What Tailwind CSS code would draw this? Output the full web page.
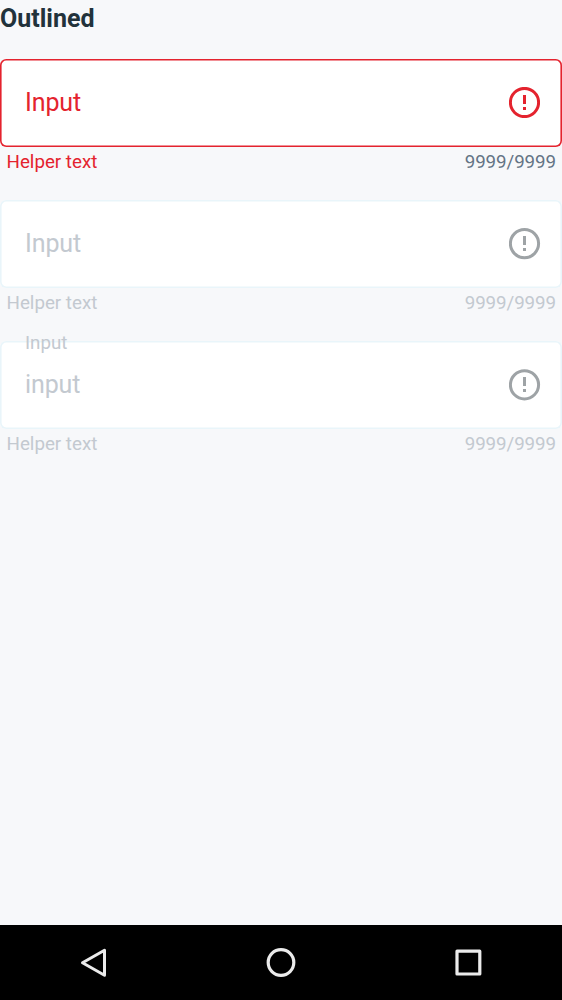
<!DOCTYPE html>
<html lang="en">
<head>
<meta charset="utf-8">
<title>Outlined</title>
<script src="https://cdn.jsdelivr.net/npm/@tailwindcss/browser@4"></script>
</head>
<body class="bg-[#f7f8fa] font-['Roboto',sans-serif]">
<div class="flex h-[1000px] w-[562px] flex-col overflow-hidden">
<main class="flex-1">
<h1 class="h-[59px] pt-[4px] text-[25px] leading-[30px] font-bold text-[#22323b]">Outlined</h1>
<section class="h-[141px] text-[#e4232e]">
<div class="flex h-[87.5px] items-center justify-between rounded-[6.25px] bg-white pr-[22px] pl-[25px] shadow-[inset_0_0_0_1.6px_#e4232e]">
<span class="text-[25px] leading-[30px] tracking-[-0.1px]">Input</span>
<svg class="mb-[0.5px] size-[31px]" viewBox="0 0 31 31" fill="none" stroke="currentColor" stroke-width="3"><circle cx="15.5" cy="15.5" r="14.1"/><path d="M15.5 8v9M15.5 20v3"/></svg>
</div>
<div class="flex justify-between pr-[6px] pl-[6.5px] pt-[3.5px] text-[18.75px] leading-[24px]"><span>Helper text</span><span class="tracking-[-0.08px] text-[#647485]">9999/9999</span></div>
</section>
<section class="h-[141px] text-[#c3c9d0]">
<div class="flex h-[88px] items-center justify-between rounded-[6.25px] bg-white pr-[22px] pl-[25px] shadow-[inset_0_0_0_1.6px_#e9f5fa]">
<span class="text-[25px] leading-[30px] tracking-[-0.1px]">Input</span>
<svg class="size-[32px] text-[#9ea3a6] -mr-px" viewBox="0 0 32 32" fill="none" stroke="currentColor" stroke-width="3"><circle cx="15.5" cy="15.6" r="14.1"/><path d="M15.5 8v9M15.5 20v3"/></svg>
</div>
<div class="flex justify-between pr-[6px] pl-[6.5px] pt-[3px] text-[18.75px] leading-[24px]"><span>Helper text</span><span class="tracking-[-0.08px]">9999/9999</span></div>
</section>
<section class="relative h-[141px] text-[#c3c9d0]">
<div class="flex h-[88px] items-center justify-between rounded-[6.25px] bg-white pr-[22px] pl-[25px] shadow-[inset_0_0_0_1.6px_#e9f5fa]">
<span class="text-[25px] leading-[30px] tracking-[-0.1px]">input</span>
<svg class="size-[32px] text-[#9ea3a6] -mr-px" viewBox="0 0 32 32" fill="none" stroke="currentColor" stroke-width="3"><circle cx="15.5" cy="15.8" r="14.1"/><path d="M15.5 8v9M15.5 20v3"/></svg>
</div>
<span class="absolute top-[-10px] left-[25px] text-[18.75px] leading-[24px]">Input</span>
<div class="flex justify-between pr-[6px] pl-[6.5px] pt-[3px] text-[18.75px] leading-[24px]"><span>Helper text</span><span class="tracking-[-0.08px]">9999/9999</span></div>
</section>
</main>
<nav class="grid h-[75px] grid-cols-3 place-items-center bg-black text-[#ebebeb]">
<svg class="size-[36px]" viewBox="0 0 36 36" fill="none" stroke="currentColor" stroke-width="3" stroke-linejoin="round"><path d="M28.5 5.2v25L6.5 17.7z"/></svg>
<svg class="size-[36px]" viewBox="0 0 36 36" fill="none" stroke="currentColor" stroke-width="3.2"><circle cx="18" cy="17.5" r="12.8"/></svg>
<svg class="size-[36px]" viewBox="0 0 36 36" fill="none" stroke="currentColor" stroke-width="3.2" stroke-linejoin="round"><path d="M7 6.2h22.8v22.8H7z"/></svg>
</nav>
</div>
</body>
</html>
